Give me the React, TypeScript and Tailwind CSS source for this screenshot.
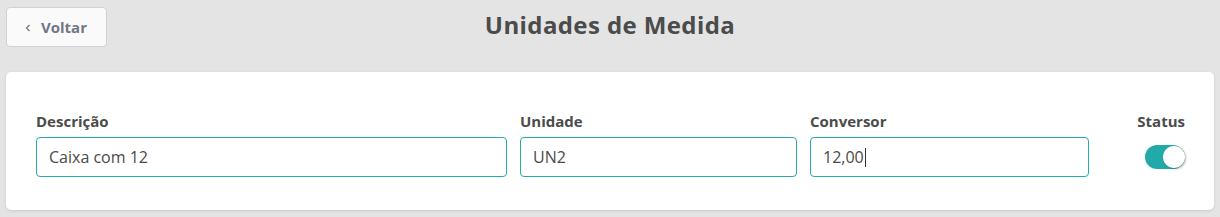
import React from "react";

export default function App() {
  const font = { fontFamily: "'Open Sans', Lato, sans-serif" };
  return (
    <div className="w-[1220px] h-[217px] bg-[#e4e4e4] overflow-hidden" style={font}>
      <div className="relative h-[72px]">
        <button className="absolute left-[6px] top-[7px] w-[101px] h-[40px] bg-[#fafafa] border border-[#cfd1d8] rounded-[4px] flex items-center pl-[16px] gap-[8px] text-[#717787] font-bold text-[15px]">
          <svg width="10" height="10" viewBox="0 0 10 10" className="mt-[1px]">
            <path d="M6.5 2 L3.5 5 L6.5 8" fill="none" stroke="#717787" strokeWidth="1.2" />
          </svg>
          <span className="leading-none">Voltar</span>
        </button>
        <div className="flex justify-center pt-[9px]">
          <h1 className="text-[24px] font-bold text-[#4b4b4b] leading-[32px] tracking-[0.4px]">Unidades de Medida</h1>
        </div>
      </div>
      <div className="mx-[6px] bg-white rounded-[5px] shadow-[0_1px_3px_rgba(0,0,0,0.12)] h-[138px] pl-[30px] pr-[29px] pt-[39px]">
        <div className="flex gap-[13px]">
          <div className="w-[471px] flex flex-col gap-[6px]">
            <label className="text-[15px] font-bold text-[#4b4b4b] leading-[20px]">Descrição</label>
            <div className="h-[40px] border border-[#28a9ab] rounded-[4px] flex items-center px-[12px] text-[16px] text-[#4a4a4a]">Caixa com 12</div>
          </div>
          <div className="w-[277px] flex flex-col gap-[6px]">
            <label className="text-[15px] font-bold text-[#4b4b4b] leading-[20px]">Unidade</label>
            <div className="h-[40px] border border-[#28a9ab] rounded-[4px] flex items-center px-[12px] text-[16px] text-[#4a4a4a]">UN2</div>
          </div>
          <div className="w-[279px] flex flex-col gap-[6px]">
            <label className="text-[15px] font-bold text-[#4b4b4b] leading-[20px]">Conversor</label>
            <div className="h-[40px] border border-[#28a9ab] rounded-[4px] flex items-center px-[12px] text-[16px] text-[#4a4a4a]">
              12,00<span className="inline-block w-[1px] h-[19px] bg-[#333] ml-[1px]"></span>
            </div>
          </div>
          <div className="flex-1 flex flex-col items-end gap-[6px]">
            <label className="text-[15px] font-bold text-[#4b4b4b] leading-[20px]">Status</label>
            <div className="h-[40px] flex items-center">
              <div className="w-[40px] h-[24px] rounded-full bg-[#22aaa9] relative">
                <div className="absolute right-[0px] top-[1px] w-[22px] h-[22px] rounded-full bg-white shadow-[1px_1px_2px_rgba(0,0,0,0.3)]"></div>
              </div>
            </div>
          </div>
        </div>
      </div>
    </div>
  );
}
